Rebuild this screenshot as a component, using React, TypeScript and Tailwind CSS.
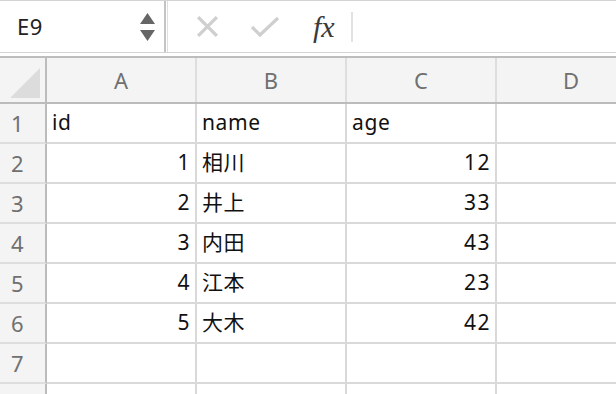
const font = { fontFamily: '"Noto Sans", "Noto Sans CJK JP", sans-serif' };

const cols = ["A", "B", "C", "D"];

const rows: (string | number)[][] = [
  ["id", "name", "age"],
  [1, "相川", 12],
  [2, "井上", 33],
  [3, "内田", 43],
  [4, "江本", 23],
  [5, "大木", 42],
  [],
  [],
];

const Cell = ({ value }: { value?: string | number }) => {
  const isNum = typeof value === "number";
  return (
    <div
      className={`h-[40px] shrink-0 w-[150px] border-r-2 border-b-2 border-[#d9d9d9] flex items-center text-[21px] text-[#111] ${
        isNum ? "justify-end pr-[4px] tracking-[1.5px]" : "justify-start pl-[5px] tracking-[0.6px]"
      }`}
    >
      {value}
    </div>
  );
};

export default function App() {
  return (
    <div className="w-[616px] h-[394px] overflow-hidden bg-white" style={font}>
      {/* formula bar */}
      <div className="h-[53px] flex border-t border-[#d4d4d4] border-b border-b-[#d4d4d4]">
        <div className="w-[166px] flex items-center justify-between pl-[17px] pr-[9px] border-r-2 border-[#c4c4c4]">
          <span className="text-[22px] text-[#222] tracking-[0.5px]">E9</span>
          <div className="flex flex-col items-center gap-[6px]">
            <svg width="15" height="11" viewBox="0 0 15 11">
              <path d="M7.5 0 L15 11 L0 11 Z" fill="#666" />
            </svg>
            <svg width="15" height="11" viewBox="0 0 15 11">
              <path d="M0 0 L15 0 L7.5 11 Z" fill="#666" />
            </svg>
          </div>
        </div>
        <div className="flex-1 flex items-center border-l border-[#e0e0e0] ml-[1px]">
          <svg width="25" height="25" viewBox="0 0 24 24" className="ml-[27px]">
            <path d="M3 3 L21 21 M21 3 L3 21" stroke="#cfcfcf" strokeWidth="3.2" />
          </svg>
          <svg width="30" height="24" viewBox="0 0 30 24" className="ml-[30px]">
            <path d="M2 12 L10 20 L28 3" stroke="#cfcfcf" strokeWidth="3.2" fill="none" />
          </svg>
          <span
            className="ml-[33px] text-[30px] italic text-[#3a3a3a] leading-none"
            style={{ fontFamily: '"Liberation Serif", "DejaVu Serif", serif' }}
          >
            fx
          </span>
          <div className="ml-[16px] w-[2px] h-[30px] bg-[#e2e2e2]" />
        </div>
      </div>
      <div className="h-[3px] bg-white border-b-2 border-[#bdbdbd] box-content" />
      {/* sheet */}
      <div className="flex flex-col">
        <div className="flex h-[46px] bg-[#f4f4f4] border-b-2 border-[#bcbcbc]">
          <div className="w-[47px] shrink-0 border-r-2 border-[#bcbcbc] flex items-end justify-end pr-[5px] pb-[4px]">
            <svg width="30" height="30" viewBox="0 0 30 30">
              <path d="M30 0 L30 30 L0 30 Z" fill="#dcdcdc" />
            </svg>
          </div>
          {cols.map((c) => (
            <div
              key={c}
              className="w-[150px] shrink-0 border-r-2 border-[#dedede] flex items-center justify-center text-[22px] text-[#707070]"
            >
              {c}
            </div>
          ))}
        </div>
        {rows.map((r, i) => (
          <div key={i} className="flex">
            <div className="w-[47px] h-[40px] shrink-0 bg-[#f4f4f4] border-r-2 border-r-[#bcbcbc] border-b-2 border-b-[#dedede] flex items-center pl-[11px] text-[22px] text-[#707070]">
              {i + 1}
            </div>
            {cols.map((c, j) => (
              <Cell key={c} value={r[j]} />
            ))}
          </div>
        ))}
      </div>
    </div>
  );
}
